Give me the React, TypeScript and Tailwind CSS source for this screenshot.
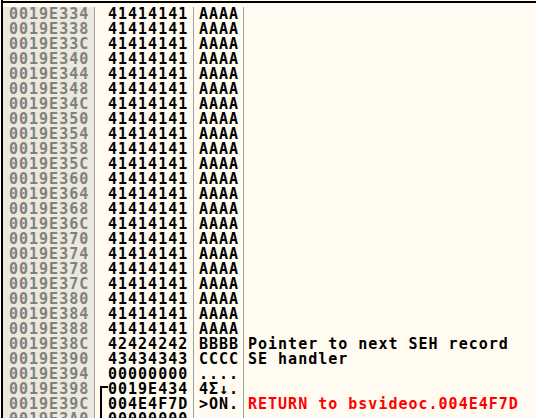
const rows: { addr: string; val: string; ascii: string; comment?: string; red?: boolean; bracket?: 'start' | 'mid' }[] = [];

for (let a = 0x19e334; a <= 0x19e388; a += 4) {
  rows.push({ addr: a.toString(16).toUpperCase().padStart(8, '0'), val: '41414141', ascii: 'AAAA' });
}
rows.push({ addr: '0019E38C', val: '42424242', ascii: 'BBBB', comment: 'Pointer to next SEH record' });
rows.push({ addr: '0019E390', val: '43434343', ascii: 'CCCC', comment: 'SE handler' });
rows.push({ addr: '0019E394', val: '00000000', ascii: '....' });
rows.push({ addr: '0019E398', val: '0019E434', ascii: '4Σ↓.', bracket: 'start' });
rows.push({ addr: '0019E39C', val: '004E4F7D', ascii: '>ON.', comment: 'RETURN to bsvideoc.004E4F7D', red: true, bracket: 'mid' });
rows.push({ addr: '0019E3A0', val: '00000000', ascii: '', bracket: 'mid' });

export default function App() {
  return (
    <div
      className="w-[536px] h-[418px] overflow-hidden bg-[#fffbf0] pl-px bg-clip-content"
      style={{ fontFamily: '"DejaVu Sans Mono", "Liberation Mono", monospace' }}
    >
      <div className="h-full border-l-2 border-black flex flex-col">
        <div className="h-px shrink-0 bg-[#fffbf0]" />
        <div className="h-[2px] shrink-0 bg-black" />
        <div className="h-[4px] shrink-0" />
        {rows.map((r) => (
          <div key={r.addr} className="flex h-[15px] shrink-0 text-[15px] leading-[15px] font-bold tracking-[1px] whitespace-pre">
            <div className="w-[92px] shrink-0 pl-[6px] bg-[#ebe8dc] text-[#808080] border-r border-[#a0a0a0]">{r.addr}</div>
            <div className="relative w-[99px] shrink-0 pl-[13px] text-black border-r border-[#a0a0a0]">
              {r.bracket === 'start' && (
                <>
                  <span className="absolute left-[5px] top-[4px] bottom-0 w-[2px] bg-black" />
                  <span className="absolute left-[5px] top-[4px] w-[8px] h-[2px] bg-black" />
                </>
              )}
              {r.bracket === 'mid' && <span className="absolute left-[5px] top-0 bottom-0 w-[2px] bg-black" />}
              {r.val}
            </div>
            <div className="w-[50px] shrink-0 pl-[5px] text-black border-r border-[#a0a0a0]">{r.ascii}</div>
            <div className={`flex-1 pl-[4px] ${r.red ? 'text-[#ff0000]' : 'text-black'}`}>{r.comment ?? ''}</div>
          </div>
        ))}
      </div>
    </div>
  );
}
